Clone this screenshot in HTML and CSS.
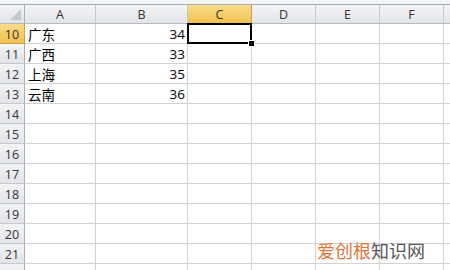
FILE: index.html
```html
<!DOCTYPE html>
<html>
<head>
<meta charset="utf-8">
<link rel="stylesheet" href="styles.css">
</head>
<body>
<div class="app">
  <div class="topstrip"></div>
  <div class="sheet">
    <div class="hdr corner"><span class="tri"></span></div>
    <div class="hdr col">A</div>
    <div class="hdr col">B</div>
    <div class="hdr col sel">C</div>
    <div class="hdr col">D</div>
    <div class="hdr col">E</div>
    <div class="hdr col">F</div>
    <div class="hdr col"></div>

    <div class="hdr row sel">10</div>
    <div class="cell txt">广东</div><div class="cell num">34</div><div class="cell active"><span class="handle"></span></div><div class="cell"></div><div class="cell"></div><div class="cell"></div><div class="cell"></div>

    <div class="hdr row">11</div>
    <div class="cell txt">广西</div><div class="cell num">33</div><div class="cell"></div><div class="cell"></div><div class="cell"></div><div class="cell"></div><div class="cell"></div>

    <div class="hdr row">12</div>
    <div class="cell txt">上海</div><div class="cell num">35</div><div class="cell"></div><div class="cell"></div><div class="cell"></div><div class="cell"></div><div class="cell"></div>

    <div class="hdr row">13</div>
    <div class="cell txt">云南</div><div class="cell num">36</div><div class="cell"></div><div class="cell"></div><div class="cell"></div><div class="cell"></div><div class="cell"></div>

    <div class="hdr row">14</div>
    <div class="cell"></div><div class="cell"></div><div class="cell"></div><div class="cell"></div><div class="cell"></div><div class="cell"></div><div class="cell"></div>

    <div class="hdr row">15</div>
    <div class="cell"></div><div class="cell"></div><div class="cell"></div><div class="cell"></div><div class="cell"></div><div class="cell"></div><div class="cell"></div>

    <div class="hdr row">16</div>
    <div class="cell"></div><div class="cell"></div><div class="cell"></div><div class="cell"></div><div class="cell"></div><div class="cell"></div><div class="cell"></div>

    <div class="hdr row">17</div>
    <div class="cell"></div><div class="cell"></div><div class="cell"></div><div class="cell"></div><div class="cell"></div><div class="cell"></div><div class="cell"></div>

    <div class="hdr row">18</div>
    <div class="cell"></div><div class="cell"></div><div class="cell"></div><div class="cell"></div><div class="cell"></div><div class="cell"></div><div class="cell"></div>

    <div class="hdr row">19</div>
    <div class="cell"></div><div class="cell"></div><div class="cell"></div><div class="cell"></div><div class="cell"></div><div class="cell"></div><div class="cell"></div>

    <div class="hdr row">20</div>
    <div class="cell"></div><div class="cell"></div><div class="cell"></div><div class="cell"></div><div class="cell"></div><div class="cell"></div><div class="cell"></div>

    <div class="hdr row">21</div>
    <div class="cell"></div><div class="cell"></div><div class="cell"></div><div class="cell"></div><div class="cell"></div><div class="cell"></div><div class="cell"></div>

    <div class="hdr row"></div>
    <div class="cell"></div><div class="cell"></div><div class="cell"></div><div class="cell"></div><div class="cell"></div><div class="cell"></div><div class="cell"></div>
  </div>
  <div class="watermark"><span class="wm-a">爱创根</span><span class="wm-b">知识网</span></div>
</div>
</body>
</html>
```

FILE: styles.css
```css
* { box-sizing: border-box; }
html, body { margin: 0; padding: 0; }
body {
  width: 450px;
  height: 270px;
  overflow: hidden;
  background: #fff;
  font-family: "Noto Sans", "Noto Sans CJK SC", sans-serif;
}
.app {
  position: relative;
  width: 450px;
  height: 270px;
  overflow: hidden;
}
.topstrip {
  height: 5px;
  background: #f4f5f7;
  border-bottom: 1px solid #a5acb5;
}
.sheet {
  display: grid;
  grid-template-columns: 25px 71px 92px 64px 64px 64px 64px 20px;
  grid-template-rows: 19px repeat(13, 20px);
}
.hdr {
  background: linear-gradient(#f3f4f6, #e2e4e8);
  border-right: 1px solid #c5c9cf;
  border-bottom: 1px solid #b5bac1;
  color: #333;
  font-family: "Open Sans", "Liberation Sans", sans-serif;
  font-size: 12.5px;
  display: flex;
  align-items: center;
  justify-content: center;
}
.hdr.col { padding-top: 1px; }
.hdr.row {
  border-right: 1px solid #a9afb7;
  border-bottom: 1px solid #c5c9cf;
  padding-top: 1px;
}
.hdr.sel {
  background: linear-gradient(#f9dc8c, #f1c14f);
  border-right-color: #c9a24a;
  border-bottom-color: #c9a24a;
  color: #333;
}
.corner {
  position: relative;
  border-right: 1px solid #a9afb7;
}
.tri {
  position: absolute;
  right: 3px;
  bottom: 3px;
  width: 0;
  height: 0;
  border-left: 11px solid transparent;
  border-bottom: 11px solid #c3c7cc;
}
.cell {
  border-right: 1px solid #d2d2d2;
  border-bottom: 1px solid #d2d2d2;
  color: #000;
  font-size: 13px;
  line-height: 1;
  display: flex;
  align-items: flex-end;
  padding-bottom: 2px;
  white-space: nowrap;
}
.cell.txt {
  padding-left: 3px;
  font-family: "Noto Sans CJK SC", sans-serif;
  font-size: 13.5px;
}
.cell.num {
  justify-content: flex-end;
  padding-right: 2px;
  font-family: "Open Sans", "Liberation Sans", sans-serif;
  font-size: 13.5px;
}
.cell.active {
  position: relative;
  border: 2px solid #000;
  margin: -1px 0 0 -1px;
  width: 65px;
  height: 21px;
}
.handle {
  position: absolute;
  right: -4px;
  bottom: -4px;
  width: 5px;
  height: 5px;
  background: #000;
  border: 1px solid #fff;
  box-sizing: content-box;
  margin: -1px;
}
.watermark {
  position: absolute;
  left: 317px;
  top: 241px;
  font-family: "Noto Sans CJK SC", sans-serif;
  font-size: 18px;
  line-height: 1;
}
.wm-a { color: #e2733a; }
.wm-b { color: #555; }
```
